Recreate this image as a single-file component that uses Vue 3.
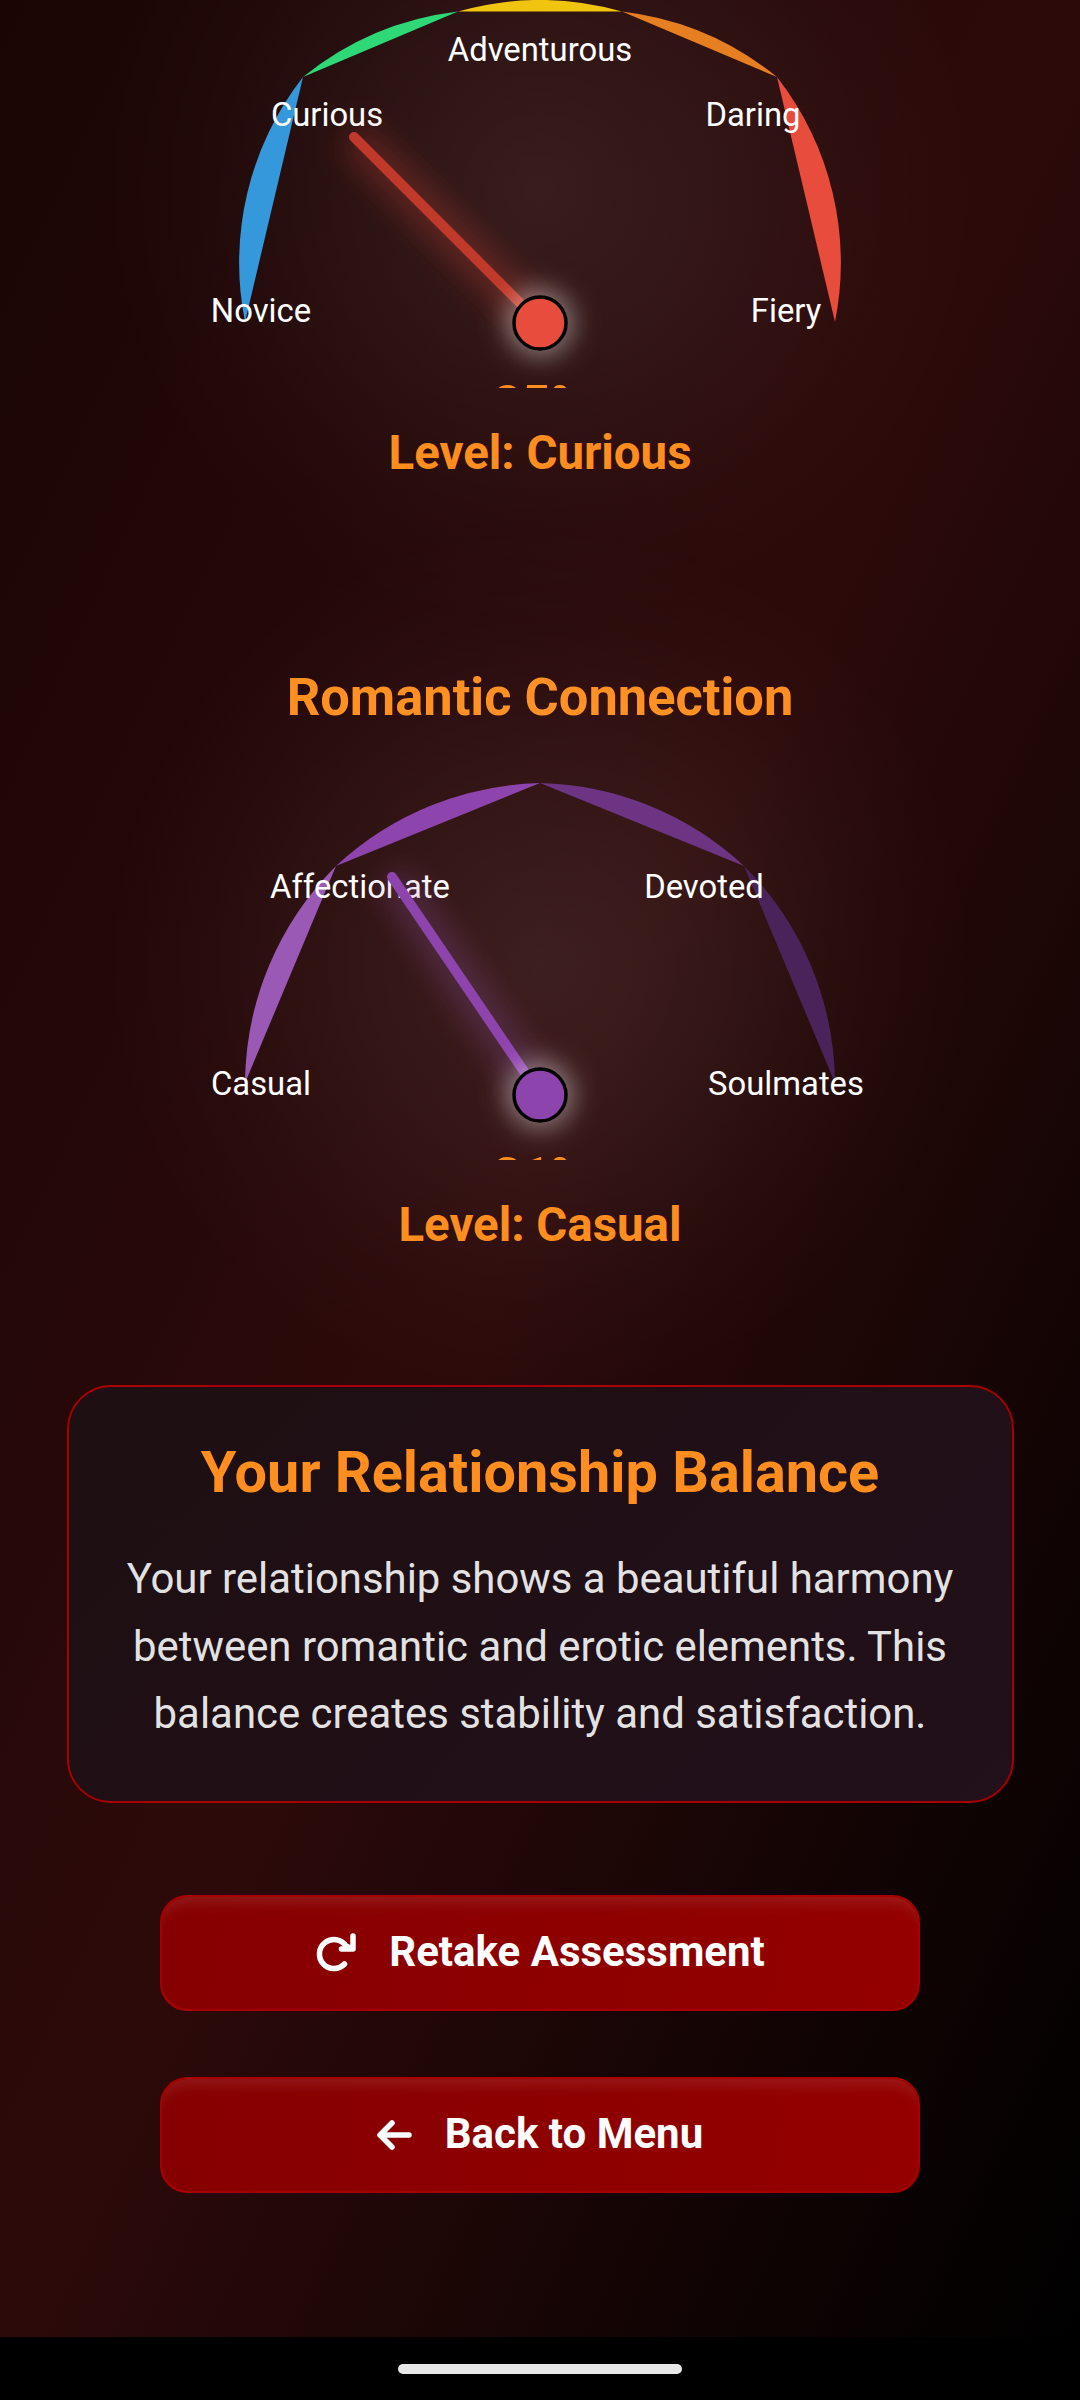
<script setup>
const gauges = [
  {
    id: 'g1',
    title: '',
    level: 'Level: Curious',
    percent: '25%',
    radius: 302,
    needle: '#c0392b',
    glow: '#e74c3c',
    dot: '#e74c3c',
    tip: [354, 137],
    points: [[245, 322], [303, 77], [458, 11.5], [622, 11.5], [777, 77], [835, 322]],
    colors: ['#3498db', '#2ed877', '#f1c40f', '#e67e22', '#e74c3c'],
    labels: [
      { text: 'Novice', x: 261, y: 322 },
      { text: 'Curious', x: 327, y: 126 },
      { text: 'Adventurous', x: 540, y: 61 },
      { text: 'Daring', x: 753, y: 126 },
      { text: 'Fiery', x: 786, y: 322 },
    ],
  },
  {
    id: 'g2',
    title: 'Romantic Connection',
    level: 'Level: Casual',
    percent: '31%',
    radius: 310,
    needle: '#8e44ad',
    glow: '#9b59b6',
    dot: '#8e44ad',
    tip: [392, 105],
    points: [[245, 311], [336, 94], [540, 11], [744, 94], [835, 311]],
    colors: ['#9b59b6', '#8e44ad', '#6c3483', '#4a235a'],
    labels: [
      { text: 'Casual', x: 261, y: 323 },
      { text: 'Affectionate', x: 360, y: 126 },
      { text: 'Devoted', x: 704, y: 126 },
      { text: 'Soulmates', x: 786, y: 323 },
    ],
  },
]

function segments(g) {
  return g.colors.map((color, i) => {
    const a = g.points[i]
    const b = g.points[i + 1]
    return {
      color,
      d: `M${a[0]} ${a[1]}A${g.radius} ${g.radius} 0 0 1 ${b[0]} ${b[1]}Z`,
    }
  })
}
</script>

<template>
  <div class="screen">
    <main class="page">
      <section v-for="g in gauges" :key="g.id" class="block">
        <h2 v-if="g.title" class="title">{{ g.title }}</h2>
        <div class="gauge">
          <svg class="dial" width="1080" height="388" viewBox="0 0 1080 388">
            <defs>
              <filter :id="g.id + 'n'" filterUnits="userSpaceOnUse" x="200" y="0" width="500" height="388">
                <feGaussianBlur stdDeviation="15" />
              </filter>
              <filter :id="g.id + 'd'" filterUnits="userSpaceOnUse" x="440" y="220" width="200" height="200">
                <feGaussianBlur stdDeviation="13" />
              </filter>
            </defs>
            <path v-for="s in segments(g)" :key="s.color" :d="s.d" :fill="s.color" />
            <text v-for="l in g.labels" :key="l.text" class="label" :x="l.x" :y="l.y">{{ l.text }}</text>
            <line x1="540" y1="323" :x2="g.tip[0]" :y2="g.tip[1]" :stroke="g.glow" stroke-width="34"
              stroke-opacity="0.27" :filter="'url(#' + g.id + 'n)'" />
            <line x1="540" y1="323" :x2="g.tip[0]" :y2="g.tip[1]" :stroke="g.needle" stroke-width="10"
              stroke-linecap="round" />
            <circle cx="540" cy="323" r="34" fill="#fff" fill-opacity="0.42" :filter="'url(#' + g.id + 'd)'" />
            <circle cx="540" cy="323" r="26" :fill="g.dot" stroke="#000" stroke-width="3.5" />
            <text class="percent" x="540" y="421">{{ g.percent }}</text>
          </svg>
        </div>
        <p class="level">{{ g.level }}</p>
      </section>

      <section class="card">
        <h3 class="card-title">Your Relationship Balance</h3>
        <p class="card-text">Your relationship shows a beautiful harmony between romantic and erotic elements. This balance creates stability and satisfaction.</p>
      </section>

      <button class="action first">
        <svg class="icon" width="44" height="44" viewBox="0 0 44 44">
          <path d="M29.5 33A14.5 14.5 0 1 1 31 15L38 18M38 5V18H26.5" />
        </svg>
        <span class="action-text">Retake Assessment</span>
      </button>
      <button class="action second">
        <svg class="icon" width="38" height="44" viewBox="5 0 38 44">
          <path d="M37 22H8M20 10L8 22L20 34" />
        </svg>
        <span class="action-text">Back to Menu</span>
      </button>
    </main>
    <footer class="nav">
      <div class="pill"></div>
    </footer>
  </div>
</template>

<style>
body { background: #000; }
</style>

<style scoped>
.screen {
  width: 1080px;
  height: 2400px;
  overflow: hidden;
  display: flex;
  flex-direction: column;
  font-family: Roboto, "Liberation Sans", sans-serif;
  background: #000;
}
.page {
  flex: 0 0 2337px;
  height: 2337px;
  overflow: hidden;
  display: flex;
  flex-direction: column;
  align-items: center;
  background: linear-gradient(to bottom right, #1a0505, #2d0a0a, #000);
}
.block {
  width: 100%;
  display: flex;
  flex-direction: column;
  align-items: center;
}
.block + .block {
  margin-top: 183px;
}
.title {
  position: relative;
  margin: 0 0 43px;
  font-size: 52.4px;
  line-height: 64px;
  font-weight: 700;
  color: #ff8e1e;
}
.gauge {
  position: relative;
  width: 1080px;
  height: 388px;
}
.gauge::before {
  content: "";
  position: absolute;
  left: 100px;
  top: -250px;
  width: 880px;
  height: 880px;
  background: radial-gradient(circle closest-side, rgba(255, 255, 255, 0.085), rgba(255, 255, 255, 0.05) 40%, rgba(255, 255, 255, 0.015) 75%, transparent 100%);
}
.dial {
  position: relative;
  display: block;
}
.label {
  fill: #fff;
  font-size: 32.8px;
  text-anchor: middle;
}
.percent {
  fill: #ff8e1e;
  font-size: 49.5px;
  font-weight: 700;
  text-anchor: middle;
}
.level {
  position: relative;
  margin: 36px 0 0;
  font-size: 47.4px;
  line-height: 58px;
  font-weight: 700;
  color: #ff8e1e;
}
.card {
  position: relative;
  box-sizing: border-box;
  width: 947px;
  height: 418px;
  margin-top: 131px;
  padding: 54px 40px 0;
  border: 2.75px solid #a80000;
  border-radius: 44px;
  background: linear-gradient(135deg, #1d0f12, #22101a);
  text-align: center;
}
.card-title {
  margin: 0 0 40px;
  font-size: 57.6px;
  line-height: 64px;
  font-weight: 700;
  color: #ff8e1e;
}
.card-text {
  margin: 0;
  font-size: 41.9px;
  line-height: 67.5px;
  color: rgba(255, 255, 255, 0.9);
}
.action {
  box-sizing: border-box;
  width: 760px;
  height: 116px;
  padding: 0;
  display: flex;
  align-items: center;
  justify-content: center;
  gap: 30px;
  border: 2.75px solid #a80000;
  border-radius: 27.5px;
  background: linear-gradient(100deg, #860000, #940000);
  box-shadow: inset 0 14px 14px -8px rgba(255, 255, 255, 0.1);
  color: #fff;
  font-family: inherit;
  font-size: 42px;
  font-weight: 700;
}
.action-text {
  padding-bottom: 3px;
}
.first {
  margin-top: 92px;
}
.second {
  margin-top: 66px;
}
.icon {
  flex: none;
  fill: none;
  stroke: #fff;
  stroke-width: 5.5;
  stroke-linecap: round;
  stroke-linejoin: round;
}
.nav {
  flex: 1;
  display: flex;
  justify-content: center;
  padding-top: 27px;
  background: #000;
}
.pill {
  width: 284px;
  height: 10px;
  border-radius: 5px;
  background: #e8e8e8;
}
</style>
